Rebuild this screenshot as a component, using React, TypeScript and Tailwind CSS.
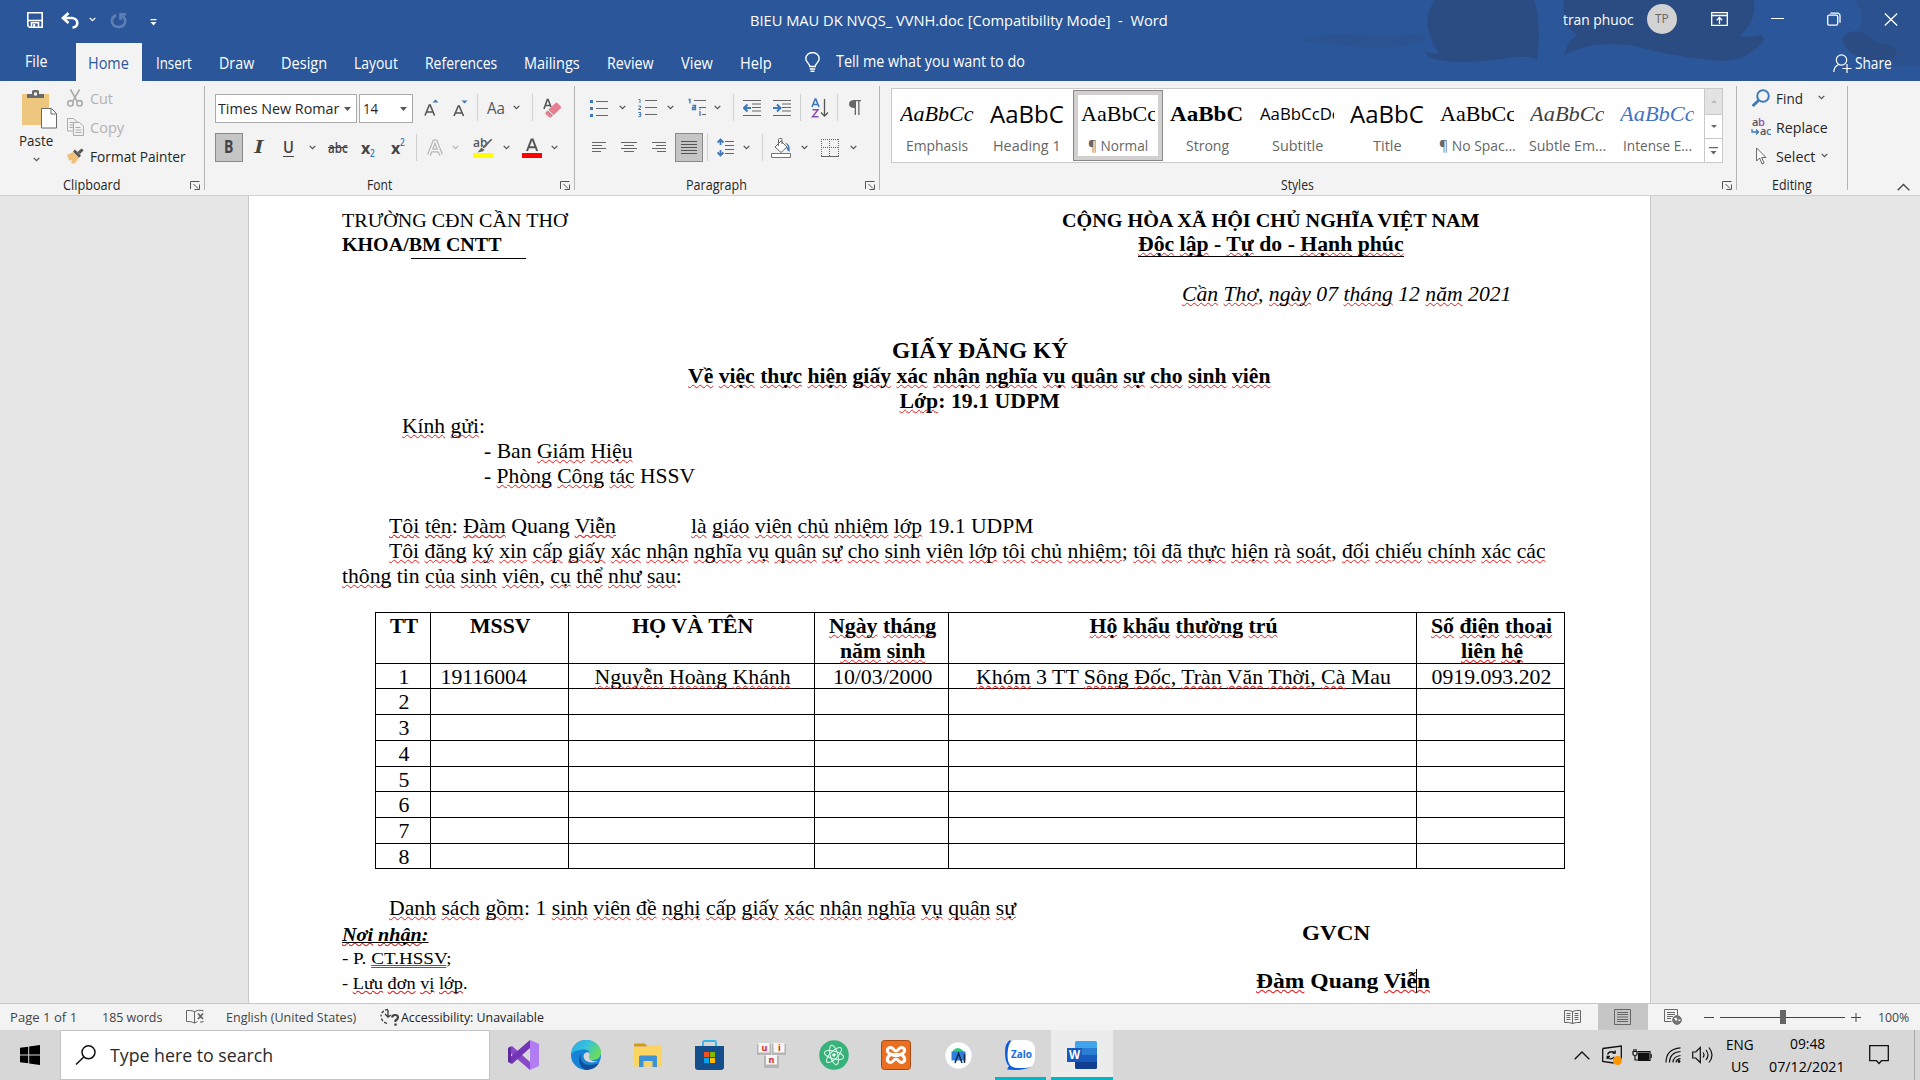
import React, { useLayoutEffect, useRef } from "react";

/* One line of text, condensed or widened so that it fills its box. */
function Fit({ className = "", children }: { className?: string; children: React.ReactNode }) {
  const box = useRef<HTMLSpanElement>(null);
  const inner = useRef<HTMLSpanElement>(null);
  useLayoutEffect(() => {
    if (!box.current || !inner.current) return;
    const natural = inner.current.offsetWidth;
    if (natural > 0) inner.current.style.transform = `scaleX(${box.current.clientWidth / natural})`;
  }, []);
  return (
    <span ref={box} className={`block shrink-0 whitespace-pre ${className}`}>
      <span ref={inner} className="inline-block origin-left [text-decoration:inherit]">
        {children}
      </span>
    </span>
  );
}

/* Words that begin with "~" get the spelling squiggle; "|" ends the marked part. */
function Spell({ t }: { t: string }) {
  return (
    <>
      {t.split(" ").map((w, i) => {
        const sp = i > 0 ? " " : "";
        if (!w.startsWith("~")) return <React.Fragment key={i}>{sp + w}</React.Fragment>;
        const [marked, rest] = w.slice(1).split("|");
        return (
          <React.Fragment key={i}>
            {sp}
            <span className="underline decoration-[#f01818] decoration-wavy decoration-[1px] underline-offset-[1px] [text-decoration-skip-ink:none]">
              {marked}
            </span>
            {rest}
          </React.Fragment>
        );
      })}
    </>
  );
}

function Chevron({ className = "", color = "#555" }: { className?: string; color?: string }) {
  return (
    <svg className={`h-[5px] w-[7px] shrink-0 ${className}`} viewBox="0 0 7 5" fill="none">
      <path d="M.7.9 3.5 3.7 6.3.9" stroke={color} strokeWidth="1.3" />
    </svg>
  );
}

function Sep({ className = "" }: { className?: string }) {
  return <div className={`h-[27px] w-px shrink-0 bg-[#d0d0d0] ${className}`} />;
}

function GroupSep() {
  return <div className="mt-[5px] h-[104px] w-px shrink-0 bg-[#b5b5b5]" />;
}

function Launcher() {
  return (
    <svg className="h-[9px] w-[10px] shrink-0" viewBox="0 0 10 9" fill="none" stroke="#555">
      <path d="M.5 8V.5H9.5M3.5 3l4.5 4.5M9.5 3.5V8.5H4.5" />
    </svg>
  );
}

function TitleBar() {
  return (
    <div className="relative z-10 flex h-[43px] text-[15px] leading-[20px] text-white">
      <svg className="mt-[12px] ml-[27px] h-[16px] w-[16px]" viewBox="0 0 16 16" fill="none" stroke="#fff" strokeWidth="1.6">
        <path d="M.8.8h14.4v14.4H2.4L.8 13.6zM.8 8.5h14.4" />
        <path d="M4.5 15v-4.2h7V15" />
        <path d="M6.2 12h2v3h-2z" fill="#fff" stroke="none" />
      </svg>
      <svg className="mt-[12px] ml-[18px] h-[17px] w-[18px]" viewBox="0 0 18 17" fill="none" stroke="#fff" strokeWidth="2.6">
        <path d="M1.5 6H11c7 .5 7 9.500.5 9.500" />
        <path d="M7.500 1 2 6l5.500 5" />
      </svg>
      <Chevron className="mt-[17px] ml-[10px]" color="#fff" />
      <svg className="mt-[12px] ml-[14px] h-[17px] w-[17px]" viewBox="0 0 17 17" fill="none" stroke="#5e80b5" strokeWidth="2.600">
        <path d="M6 3C-1 7 2 15 8.500 15s9-7 4-11M10.500 8V2.200H16" />
      </svg>
      <svg className="mt-[19px] ml-[23px] h-[7px] w-[7px]" viewBox="0 0 7 7">
        <path d="M.5 0h6v1.300h-6zM.5 3h6L3.500 6.500z" fill="#fff" />
      </svg>
      <Fit className="mt-[10px] ml-[593px] w-[418px]">BIEU MAU DK NVQS_ VVNH.doc [Compatibility Mode]  -  Word</Fit>
      <Fit className="mt-[9px] ml-[395px] w-[71px]">tran phuoc</Fit>
      <div className="mt-[4px] ml-[13px] flex h-[30px] w-[30px] shrink-0 items-center justify-center rounded-full bg-[#d2d2d2]">
        <Fit className="w-[14px] text-[12px] text-[#666]">TP</Fit>
      </div>
      <svg className="mt-[12px] ml-[34px] h-[14px] w-[17px] shrink-0" viewBox="0 0 17 14" fill="none" stroke="#fff" strokeWidth="1.300">
        <path d="M.7.7h15.600v12.600H.7zM.7 3.500h15.600M8.500 12V6M5.800 8.200l2.700-2.700 2.700 2.700" />
      </svg>
      <div className="mt-[18px] ml-[43px] h-px w-[13px] shrink-0 bg-white" />
      <svg className="mt-[12px] ml-[43px] h-[14px] w-[14px] shrink-0" viewBox="0 0 14 14" fill="none" stroke="#fff" strokeWidth="1.300">
        <rect x=".7" y="3.200" width="10" height="10" rx="1.500" />
        <path d="M3.300 1.200h7a2.500 2.500 0 0 1 2.700 2.500v7" />
      </svg>
      <svg className="mt-[13px] ml-[43px] h-[13px] w-[14px] shrink-0" viewBox="0 0 14 13" stroke="#fff" strokeWidth="1.300">
        <path d="M.8.500l12.400 12M13.200.5.800 12.500" />
      </svg>
    </div>
  );
}

function Tabs() {
  return (
    <div className="relative z-10 flex h-[38px] text-[15.500px] leading-[20px] text-white">
      <Fit className="mt-[8px] ml-[25px] w-[23px]">File</Fit>
      <div className="ml-[28px] h-[38px] w-[66px] shrink-0 bg-[#f3f3f3] pt-[10px] pl-[12px] text-[#2b579a]">
        <Fit className="w-[41px]">Home</Fit>
      </div>
      <Fit className="mt-[10px] ml-[14px] w-[36px]">Insert</Fit>
      <Fit className="mt-[10px] ml-[27px] w-[35px]">Draw</Fit>
      <Fit className="mt-[10px] ml-[27px] w-[46px]">Design</Fit>
      <Fit className="mt-[10px] ml-[27px] w-[44px]">Layout</Fit>
      <Fit className="mt-[10px] ml-[27px] w-[72px]">References</Fit>
      <Fit className="mt-[10px] ml-[27px] w-[56px]">Mailings</Fit>
      <Fit className="mt-[10px] ml-[27px] w-[47px]">Review</Fit>
      <Fit className="mt-[10px] ml-[27px] w-[32px]">View</Fit>
      <Fit className="mt-[10px] ml-[27px] w-[32px]">Help</Fit>
      <svg className="mt-[9px] ml-[33px] h-[20px] w-[15px] shrink-0" viewBox="0 0 15 20" fill="none" stroke="#fff" strokeWidth="1.400">
        <path d="M4.800 14.500c0-3-4-4-4-8a6.700 6 0 0 1 13.400 0c0 4-4 5-4 8zM4.800 17h5.400M5.500 19.300h4" />
      </svg>
      <Fit className="mt-[8px] ml-[16px] w-[189px]">Tell me what you want to do</Fit>
      <svg className="mt-[11px] ml-[808px] h-[19px] w-[19px] shrink-0" viewBox="0 0 19 19" fill="none" stroke="#fff" strokeWidth="1.200">
        <circle cx="8.500" cy="6" r="5.200" />
        <path d="M.7 18c.3-4 2-6.500 5.300-7.500M14 10v9M9.500 14.500h9" />
      </svg>
      <Fit className="mt-[10px] ml-[3px] w-[37px]">Share</Fit>
    </div>
  );
}

function ClipboardGroup() {
  return (
    <div className="flex h-[114px] w-[204px] shrink-0 flex-col">
      <div className="flex h-[96px] pl-[18px]">
        <div className="w-[49px] pt-[9px]">
          <svg className="ml-[4px] h-[39px] w-[35px]" viewBox="0 0 35 39">
            <path d="M0 4h27v31H0z" fill="#eec77e" />
            <path d="M5 8V4h5V1.500Q10 0 11.500 0h4Q17 0 17 1.500V4h5v4z" fill="#6a6a6a" />
            <path d="M12 2.500h3v3h-3z" fill="#f3f3f3" />
            <path d="M19.500 18.500h10l5 5v14.500h-15z" fill="#fff" stroke="#6a6a6a" />
            <path d="M29 18.500v5.500h5.500" fill="none" stroke="#6a6a6a" />
          </svg>
          <Fit className="mt-[1px] ml-px w-[34px]">Paste</Fit>
          <Chevron className="mt-[7px] ml-[15px]" />
        </div>
        <div className="pt-[2px]">
          <div className="flex h-[29px] items-center text-[#b1b1b1]">
            <svg className="h-[18px] w-[16px]" viewBox="0 0 16 18" fill="none" stroke="#ababab" strokeWidth="1.600">
              <path d="M3.500.500 10 12M12.500.500 6 12" />
              <circle cx="3.500" cy="14.300" r="2.700" />
              <circle cx="12.500" cy="14.300" r="2.700" />
            </svg>
            <Fit className="ml-[7px] w-[23px]">Cut</Fit>
          </div>
          <div className="flex h-[29px] items-center text-[#b1b1b1]">
            <svg className="h-[18px] w-[17px]" viewBox="0 0 17 18" fill="#f3f3f3" stroke="#ababab">
              <path d="M.5.500h6l3.500 3v9.500H.5zM2.500 4.500h4M2.500 7h4M2.500 9.500h4" />
              <path d="M6.500 4.500h6l4 3.500v9.500h-10zM8.500 9.500h5M8.500 12h6M8.500 14.500h6" />
            </svg>
            <Fit className="ml-[6px] w-[34px]">Copy</Fit>
          </div>
          <div className="flex h-[29px] items-center">
            <svg className="h-[16px] w-[17px]" viewBox="0 0 17 16">
              <path d="M0 7 6 4l6 6-5 6-3-1.500.8-2.500L2 12.500z" fill="#eec07a" />
              <path d="M6 3.500 8 1.500l6 6-2 2.200z" fill="#555" />
              <path d="M10.500 4 14.500.5 16.700 2.300 13 6z" fill="#555" />
            </svg>
            <Fit className="ml-[6px] w-[96px]">Format Painter</Fit>
          </div>
        </div>
      </div>
      <div className="flex h-[16px] items-center pl-[63px] text-[14px] leading-[16px]">
        <Fit className="mr-[69px] w-[58px]">Clipboard</Fit>
        <Launcher />
      </div>
    </div>
  );
}

function FontGroup() {
  return (
    <div className="flex h-[114px] w-[369px] shrink-0 flex-col">
      <div className="h-[96px] pt-[13px] pl-[10px]">
        <div className="flex h-[29px] items-center pb-[2px]">
          <div className="mt-[2px] flex h-[29px] w-[142px] shrink-0 items-center border border-[#ababab] bg-white pl-[2px]">
            <Fit className="w-[121px] pb-[2px]">Times New Romar</Fit>
            <svg className="ml-[5px] h-[4px] w-[7px]" viewBox="0 0 7 4"><path d="M0 0h7L3.500 4z" fill="#555" /></svg>
          </div>
          <div className="mt-[2px] ml-[2px] flex h-[29px] w-[54px] shrink-0 items-center border border-[#ababab] bg-white pl-[3px]">
            <Fit className="w-[15px] pb-[2px]">14</Fit>
            <svg className="ml-[22px] h-[4px] w-[7px]" viewBox="0 0 7 4"><path d="M0 0h7L3.500 4z" fill="#555" /></svg>
          </div>
          <svg className="ml-[11px] h-[18px] w-[15px] shrink-0" viewBox="0 0 15 18" fill="none">
            <path d="M1 16.500 5.300 6h.9l4.300 10.500M2.500 13h6.500" stroke="#555" strokeWidth="1.600" />
            <path d="M8.500 3.500h6L11.500.5z" fill="#3d79b8" />
          </svg>
          <svg className="ml-[14px] h-[18px] w-[15px] shrink-0" viewBox="0 0 15 18" fill="none">
            <path d="M1 17 5.300 7h.9l4.300 10M2.500 14h6.500" stroke="#555" strokeWidth="1.600" />
            <path d="M8.500 1.500h6L11.500 4.500z" fill="#3d79b8" />
          </svg>
          <Sep className="ml-[9px]" />
          <Fit className="ml-[9px] w-[18px] text-[16px] text-[#555]">Aa</Fit>
          <Chevron className="ml-[8px]" />
          <Sep className="ml-[12px]" />
          <svg className="ml-[10px] h-[20px] w-[19px] shrink-0" viewBox="0 0 19 20" fill="none">
            <path d="M1 11 4.300 1.500h.8L8 9M2.500 7.500h4.500" stroke="#555" strokeWidth="1.600" />
            <path d="m2.500 14.500 10-9.500q1-1 2 0l3.300 3.500q.8 1-.2 2L8 19.500H6.500l-4-3.500z" fill="#e67f92" />
            <path d="m5 12 5.500 5.500" stroke="#f3f3f3" />
          </svg>
        </div>
        <div className="mt-[10px] flex h-[29px] items-center text-[#444]">
          <div className="flex h-[29px] w-[28px] shrink-0 items-center border border-[#8a8a8a] bg-[#c5c5c5] pl-[8px]">
            <Fit className="w-[9px] pb-[2px] text-[17px] font-bold">B</Fit>
          </div>
          <Fit className="ml-[11px] w-[9px] pb-[2px] font-['Liberation_Serif'] text-[19px] font-bold italic">I</Fit>
          <Fit className="ml-[20px] w-[11px] pb-[2px] text-[16px] font-semibold underline underline-offset-[3px]">U</Fit>
          <Chevron className="ml-[15px]" />
          <Fit className="ml-[12px] w-[20px] text-[14px] font-semibold line-through">abc</Fit>
          <Fit className="ml-[13px] w-[9px] text-[16px] font-bold">x</Fit>
          <Fit className="mt-[10px] w-[5px] text-[10px] font-semibold text-[#3d79b8]">2</Fit>
          <Fit className="ml-[16px] w-[9px] text-[16px] font-bold">x</Fit>
          <Fit className="mb-[12px] w-[5px] text-[10px] font-semibold text-[#3d79b8]">2</Fit>
          <Sep className="ml-[11px]" />
          <svg className="ml-[10px] h-[17px] w-[16px] shrink-0" viewBox="0 0 16 17" fill="none">
            <path d="M2 16 7.200 2.500h1.600L14 16M4 11.500h8" stroke="#b5b5b5" strokeWidth="4" />
            <path d="M2 16 7.200 2.500h1.600L14 16M4 11.500h8" stroke="#f6f6f6" strokeWidth="1.600" />
          </svg>
          <Chevron className="ml-[9px]" color="#b5b5b5" />
          <div className="ml-[14px] flex h-[20px] w-[20px] shrink-0 flex-col justify-between">
            <svg className="h-[15px] w-[20px]" viewBox="0 0 20 15">
              <text x="0" y="9" fontSize="12" fontWeight="600" fill="#555" fontFamily="Open Sans">ab</text>
              <path d="m19.500 1.500-8.500 9-1.500-1.500L18 .800zM8.500 9.500l3 2.500-2 1.500-5 1z" fill="#666" />
            </svg>
            <div className="h-[5px] bg-[#ffff00]" />
          </div>
          <Chevron className="ml-[10px]" />
          <div className="ml-[12px] flex h-[20px] w-[20px] shrink-0 flex-col justify-between">
            <svg className="h-[14px] w-[20px]" viewBox="0 0 20 14" fill="none">
              <path d="M5 13 9.500 1.500h1.200L15.200 13M6.500 9.300h7" stroke="#555" strokeWidth="2" />
            </svg>
            <div className="h-[5px] bg-[#ff0000]" />
          </div>
          <Chevron className="ml-[9px]" />
        </div>
      </div>
      <div className="flex h-[16px] items-center pl-[162px] text-[14px] leading-[16px]">
        <Fit className="mr-[168px] w-[25px]">Font</Fit>
        <Launcher />
      </div>
    </div>
  );
}

function ParagraphGroup() {
  return (
    <div className="flex h-[114px] w-[304px] shrink-0 flex-col">
      <div className="h-[96px] pt-[13px] pl-[15px]">
        <div className="flex h-[29px] items-center pb-[2px]">
          <svg className="h-[18px] w-[18px] shrink-0" viewBox="0 0 18 18">
            <path d="M0 1h3v3H0zM0 8h3v3H0zM0 15h3v3H0z" fill="#3d79b8" />
            <path d="M6 2.500h12M6 9.500h12M6 16.500h12" stroke="#666" />
          </svg>
          <Chevron className="ml-[11px]" />
          <svg className="ml-[12px] h-[19px] w-[19px] shrink-0" viewBox="0 0 19 19" fill="none">
            <path d="M.5 1.500H2V5M.3 8h2.400v1L.5 11.500h2.500M.3 14.500h2.400v4H.3M1 16.500h1.700" stroke="#3d79b8" />
            <path d="M7 2.500h12M7 9.500h12M7 16.500h12" stroke="#666" />
          </svg>
          <Chevron className="ml-[10px]" />
          <svg className="ml-[14px] h-[19px] w-[18px] shrink-0" viewBox="0 0 18 19" fill="none">
            <path d="M.5 1.500H2V5.500M4.500 7.500h3v4h-3v-2h3M12 10.500v1.200M12 13V18" stroke="#3d79b8" strokeWidth="1.300" />
            <path d="M6 2.500h12M11 9.500h7M14 16.500h4" stroke="#666" />
          </svg>
          <Chevron className="ml-[8px]" />
          <Sep className="ml-[12px]" />
          <svg className="ml-[9px] h-[18px] w-[18px] shrink-0" viewBox="0 0 18 18" fill="none">
            <path d="M0 1.500h18M9 5h9M9 8.500h9M9 12h9M0 16.500h18" stroke="#666" />
            <path d="M8 9H2M4.500 5.500 1 9l3.500 3.500" stroke="#3d79b8" strokeWidth="2" />
          </svg>
          <svg className="ml-[12px] h-[18px] w-[18px] shrink-0" viewBox="0 0 18 18" fill="none">
            <path d="M0 1.500h18M9 5h9M9 8.500h9M9 12h9M0 16.500h18" stroke="#666" />
            <path d="M0 9h6M4 5.500 7.500 9 4 12.500" stroke="#3d79b8" strokeWidth="2" />
          </svg>
          <Sep className="ml-[9px]" />
          <svg className="ml-[10px] h-[20px] w-[18px] shrink-0" viewBox="0 0 18 20" fill="none">
            <path d="M1 9 4.200 1h.6L8 9M2.200 6.500h4.600" stroke="#3d79b8" strokeWidth="1.600" />
            <path d="M1.500 11.800h5.500l-5.500 7h6" stroke="#8e4fae" strokeWidth="1.500" />
            <path d="M13.500 1v17M10 14.500l3.500 3.500 3.500-3.500" stroke="#555" strokeWidth="1.300" />
          </svg>
          <Sep className="ml-[8px]" />
          <svg className="ml-[11px] h-[16px] w-[12px] shrink-0" viewBox="0 0 12 16">
            <path d="M5.500 0H12v1.300h-1.500V15H9.200V1.300H7V15H5.700V8C2 8 0 6.500 0 4s2-4 5.500-4z" fill="#666" />
          </svg>
        </div>
        <div className="mt-[10px] flex h-[29px] items-center">
          <svg className="ml-[2px] h-[13px] w-[14px] shrink-0" viewBox="0 0 14 13" stroke="#666">
            <path d="M0 1.500h14M0 4.500h10M0 7.500h14M0 10.500h9" />
          </svg>
          <svg className="ml-[15px] h-[13px] w-[16px] shrink-0" viewBox="0 0 16 13" stroke="#666">
            <path d="M0 1.500h16M3 4.500h10M0 7.500h16M3 10.500h10" />
          </svg>
          <svg className="ml-[15px] h-[13px] w-[14px] shrink-0" viewBox="0 0 14 13" stroke="#666">
            <path d="M0 1.500h14M4 4.500h10M0 7.500h14M5 10.500h9" />
          </svg>
          <div className="ml-[9px] flex h-[29px] w-[28px] shrink-0 items-center justify-center border border-[#8a8a8a] bg-[#c5c5c5]">
            <svg className="h-[14px] w-[16px]" viewBox="0 0 16 14" stroke="#555">
              <path d="M0 .500h16M0 3.500h16M0 6.500h16M0 9.500h16M0 12.500h16" />
            </svg>
          </div>
          <Sep className="ml-[4px]" />
          <svg className="ml-[9px] h-[19px] w-[17px] shrink-0" viewBox="0 0 17 19" fill="none">
            <path d="M3.500 1v6M3.500 12v6M.5 4.500l3-3 3 3M.5 14.500l3 3 3-3" stroke="#3d79b8" strokeWidth="1.800" />
            <path d="M8 3.500h9M8 7.500h9M8 11.500h9M8 15.500h9" stroke="#666" />
          </svg>
          <Chevron className="ml-[9px]" />
          <Sep className="ml-[12px]" />
          <svg className="ml-[8px] h-[20px] w-[20px] shrink-0" viewBox="0 0 20 20" fill="none">
            <path d="M4 9 10 3l6 6-6 5.500z" fill="#fff" stroke="#666" />
            <path d="M7.500 8V1.500q0-1 1-1h1.500q1 0 1 1V6" stroke="#666" />
            <path d="M14 4.500q6 1.500 4.500 9.500-1.500-1-3-3l1.500-2.500z" fill="#3d79b8" />
            <path d="M.5 15.500h19v4H.5z" fill="#fff" stroke="#777" />
          </svg>
          <Chevron className="ml-[10px]" />
          <svg className="ml-[13px] h-[18px] w-[18px] shrink-0" viewBox="0 0 18 18" fill="none" stroke="#666">
            <path d="M0 .500h18M.5 0v17M17.500 0v17M8.500 0v17M0 8.500h18" strokeDasharray="1 1" />
            <path d="M0 17.500h18" />
          </svg>
          <Chevron className="ml-[11px]" />
        </div>
      </div>
      <div className="flex h-[16px] items-center pl-[111px] text-[14px] leading-[16px]">
        <Fit className="mr-[118px] w-[61px]">Paragraph</Fit>
        <Launcher />
      </div>
    </div>
  );
}

type Style = { sample: string; label: string; look: string; width: string };

const STYLES: Style[] = [
  { sample: "AaBbCc", label: "Emphasis", look: "font-['Liberation_Serif'] text-[21.5px] italic w-[74px]", width: "w-[62px]" },
  { sample: "AaBbC", label: "Heading 1", look: "text-[24px] w-[74px]", width: "w-[68px]" },
  { sample: "AaBbCc", label: "¶ Normal", look: "font-['Liberation_Serif'] text-[21.5px] w-[76px]", width: "w-[60px]" },
  { sample: "AaBbC", label: "Strong", look: "font-['Liberation_Serif'] text-[21.5px] font-bold w-[73px]", width: "w-[43px]" },
  { sample: "AaBbCcDc", label: "Subtitle", look: "text-[17px] w-[80px]", width: "w-[51px]" },
  { sample: "AaBbC", label: "Title", look: "text-[24px] w-[74px]", width: "w-[29px]" },
  { sample: "AaBbCc", label: "¶ No Spac...", look: "font-['Liberation_Serif'] text-[21.5px] w-[76px]", width: "w-[77px]" },
  { sample: "AaBbCc", label: "Subtle Em...", look: "font-['Liberation_Serif'] text-[21.5px] italic text-[#404040] w-[75px]", width: "w-[77px]" },
  { sample: "AaBbCc", label: "Intense E...", look: "font-['Liberation_Serif'] text-[21.5px] italic text-[#4472c4] w-[75px]", width: "w-[69px]" },
];

function StylesGroup() {
  return (
    <div className="flex h-[114px] w-[856px] shrink-0 flex-col">
      <div className="h-[96px] pt-[7px] pl-[11px]">
        <div className="flex h-[75px] w-[832px] border border-[#c9c9c9] bg-white">
          <div className="flex w-[812px] shrink-0 pt-px pl-px">
            {STYLES.map((s, i) => (
              <div
                key={s.label}
                className={`flex h-[71px] w-[90px] shrink-0 flex-col items-center ${
                  i === 2 ? "border border-[#8a8886] shadow-[inset_0_0_0_4px_#d2d0ce]" : "border border-transparent pr-[2px]"
                }`}
              >
                <div className="mt-[9px] w-[74px] overflow-hidden text-black">
                  <Fit className={`h-[28px] leading-[28px] ${s.look}`}>{s.sample}</Fit>
                </div>
                <Fit className={`mt-[7px] text-[15px] leading-[20px] text-[#666] ${s.width}`}>{s.label}</Fit>
              </div>
            ))}
          </div>
          <div className="flex w-[18px] shrink-0 flex-col border-l border-[#c9c9c9]">
            <div className="flex h-[26px] items-center justify-center border-b border-[#c9c9c9] bg-[#e3e3e3]">
              <svg className="h-[3px] w-[6px]" viewBox="0 0 6 3"><path d="M0 3h6L3 0z" fill="#b8b8b8" /></svg>
            </div>
            <div className="flex h-[24px] items-center justify-center border-b border-[#c9c9c9]">
              <svg className="h-[3px] w-[6px]" viewBox="0 0 6 3"><path d="M0 0h6L3 3z" fill="#666" /></svg>
            </div>
            <div className="flex flex-1 items-center justify-center">
              <svg className="h-[8px] w-[9px]" viewBox="0 0 9 8"><path d="M0 0h9v1.200H0zM1.500 4h6l-3 3.500z" fill="#666" /></svg>
            </div>
          </div>
        </div>
      </div>
      <div className="flex h-[16px] items-center pl-[401px] text-[14px] leading-[16px]">
        <Fit className="mr-[408px] w-[33px]">Styles</Fit>
        <Launcher />
      </div>
    </div>
  );
}

function EditingGroup() {
  return (
    <div className="flex h-[114px] w-[110px] shrink-0 flex-col">
      <div className="h-[96px] pt-[2px] pl-[14px]">
        <div className="flex h-[29px] items-center">
          <svg className="mr-[6px] ml-px h-[18px] w-[18px]" viewBox="0 0 18 18" fill="none" stroke="#3d79b8">
            <circle cx="11" cy="7" r="5.800" strokeWidth="2" />
            <path d="M6.500 11.500.8 17" strokeWidth="2.800" />
          </svg>
          <Fit className="w-[27px]">Find</Fit>
          <Chevron className="ml-[15px]" />
        </div>
        <div className="flex h-[29px] items-center">
          <svg className="mr-[5px] h-[18px] w-[20px]" viewBox="0 0 20 18" fill="none">
            <text x="1" y="8" fontSize="11" fontWeight="600" fill="#555" fontFamily="Open Sans">a</text>
            <text x="7" y="8" fontSize="11" fontWeight="600" fill="#8e4fae" fontFamily="Open Sans">b</text>
            <text x="9" y="17" fontSize="11" fontWeight="600" fill="#555" fontFamily="Open Sans">a</text>
            <text x="15" y="17" fontSize="11" fontWeight="600" fill="#3d79b8" fontFamily="Open Sans">c</text>
            <path d="M1 11v3h6M5 11.500 7.500 14 5 16.500" stroke="#3d79b8" strokeWidth="1.300" />
          </svg>
          <Fit className="w-[52px]">Replace</Fit>
        </div>
        <div className="flex h-[29px] items-center">
          <svg className="mr-[9px] ml-[5px] h-[18px] w-[11px]" viewBox="0 0 11 18">
            <path d="M.6 1v13l3-3 2.500 6 2-1-2.500-5.500H10z" fill="#fff" stroke="#666" />
          </svg>
          <Fit className="w-[39px]">Select</Fit>
          <Chevron className="ml-[6px]" />
        </div>
      </div>
      <div className="flex h-[16px] items-center pl-[35px] text-[14px] leading-[16px]">
        <Fit className="w-[40px]">Editing</Fit>
      </div>
    </div>
  );
}

const ROWS = [
  { n: "2", h: "h-[26px]" },
  { n: "3", h: "h-[26px]" },
  { n: "4", h: "h-[26px]" },
  { n: "5", h: "h-[25px]" },
  { n: "6", h: "h-[26px]" },
  { n: "7", h: "h-[26px]" },
  { n: "8", h: "h-[25px]" },
];

function Cell({ className = "pl-[2px]", children }: { className?: string; children?: React.ReactNode }) {
  return <div className={`flex flex-col items-center border-r border-black pt-px ${className}`}>{children}</div>;
}

function StudentTable() {
  const cols = "grid grid-cols-[55px_138px_246px_134px_468px_148px] grid-rows-[100%] border-b border-black";
  return (
    <div className="mt-[23px] ml-[126px] w-[1190px] border-t border-l border-black leading-[25px]">
      <div className={`h-[51px] font-bold ${cols}`}>
        <Cell><Fit className="w-[28px]">TT</Fit></Cell>
        <Cell><Fit className="w-[61px]">MSSV</Fit></Cell>
        <Cell><Fit className="w-[121px]">HỌ VÀ TÊN</Fit></Cell>
        <Cell>
          <Fit className="w-[107px]"><Spell t="~Ngày ~tháng" /></Fit>
          <Fit className="w-[85px]"><Spell t="~năm ~sinh" /></Fit>
        </Cell>
        <Cell><Fit className="w-[188px]"><Spell t="~Hộ ~khẩu ~thường ~trú" /></Fit></Cell>
        <Cell>
          <Fit className="w-[121px]"><Spell t="~Số ~điện ~thoại" /></Fit>
          <Fit className="w-[62px]"><Spell t="~liên ~hệ" /></Fit>
        </Cell>
      </div>
      <div className={`h-[25px] ${cols}`}>
        <Cell><Fit className="w-[11px]">1</Fit></Cell>
        <Cell className="pr-[32px]"><Fit className="w-[86px]">19116004</Fit></Cell>
        <Cell><Fit className="w-[196px]"><Spell t="~Nguyễn ~Hoàng ~Khánh" /></Fit></Cell>
        <Cell><Fit className="w-[99px]">10/03/2000</Fit></Cell>
        <Cell><Fit className="w-[415px]"><Spell t="~Khóm 3 TT ~Sông ~Đốc|, ~Tràn ~Văn ~Thời|, ~Cà Mau" /></Fit></Cell>
        <Cell><Fit className="w-[120px]">0919.093.202</Fit></Cell>
      </div>
      {ROWS.map((r) => (
        <div key={r.n} className={`${r.h} ${cols}`}>
          <Cell><Fit className="w-[11px]">{r.n}</Fit></Cell>
          <Cell /><Cell /><Cell /><Cell /><Cell />
        </div>
      ))}
    </div>
  );
}

function Document() {
  return (
    <div className="h-[807px] overflow-hidden bg-[#e6e6e6]">
      <div className="ml-[248px] h-[807px] w-[1403px] border-x border-[#c6c6c6] bg-white pt-[13px] font-['Liberation_Serif',serif] text-[21.8px] leading-[25px] text-black">
        <div className="flex h-[48px] text-[19px] leading-[24px]">
          <div className="ml-[93px] w-[720px]">
            <Fit className="w-[225px]">TRƯỜNG CĐN CẦN THƠ</Fit>
            <Fit className="w-[159px] font-bold">KHOA/BM CNTT</Fit>
            <div className="mt-px ml-[69px] h-px w-[115px] bg-black" />
          </div>
          <div className="flex w-[418px] flex-col items-center font-bold">
            <Fit className="w-[418px]">CỘNG HÒA XÃ HỘI CHỦ NGHĨA VIỆT NAM</Fit>
            <Fit className="-mt-px w-[266px] text-[21.8px]"><Spell t="~Độc ~lập - ~Tự do - ~Hạnh ~phúc" /></Fit>
            <div className="h-px w-[266px] bg-black" />
          </div>
        </div>
        <Fit className="mt-[25px] ml-[933px] w-[329px] italic"><Spell t="~Cần ~Thơ|, ~ngày 07 ~tháng 12 ~năm 2021" /></Fit>
        <div className="mt-[31px] ml-[439px] flex w-[583px] flex-col items-center font-bold">
          <Fit className="mb-px w-[176px] text-[22.500px]">GIẤY ĐĂNG KÝ</Fit>
          <Fit className="w-[583px]"><Spell t="~Về ~việc ~thực ~hiện ~giấy ~xác ~nhận ~nghĩa ~vụ ~quân ~sự ~cho ~sinh ~viên" /></Fit>
          <Fit className="w-[160px]"><Spell t="~Lớp|: 19.1 UDPM" /></Fit>
        </div>
        <Fit className="ml-[153px] w-[83px]"><Spell t="~Kính ~gửi|:" /></Fit>
        <Fit className="ml-[235px] w-[149px]"><Spell t="- Ban ~Giám ~Hiệu" /></Fit>
        <Fit className="ml-[235px] w-[211px]"><Spell t="- ~Phòng ~Công ~tác HSSV" /></Fit>
        <div className="mt-[25px] ml-[140px] flex">
          <Fit className="w-[227px]"><Spell t="~Tôi ~tên|: ~Đàm Quang ~Viễn" /></Fit>
          <Fit className="ml-[75px] w-[343px]"><Spell t="~là ~giáo ~viên ~chủ ~nhiệm ~lớp 19.1 UDPM" /></Fit>
        </div>
        <Fit className="ml-[140px] w-[1157px]">
          <Spell t="~Tôi ~đăng ~ký ~xin ~cấp ~giấy ~xác ~nhận ~nghĩa ~vụ ~quân ~sự ~cho ~sinh ~viên ~lớp ~tôi ~chủ ~nhiệm|; ~tôi ~đã ~thực ~hiện ~rà ~soát|, ~đối ~chiếu ~chính ~xác ~các" />
        </Fit>
        <Fit className="ml-[93px] w-[340px]"><Spell t="~thông tin ~của ~sinh ~viên|, ~cụ ~thể ~như ~sau|:" /></Fit>
        <StudentTable />
        <Fit className="mt-[27px] ml-[140px] w-[627px]">
          <Spell t="~Danh ~sách ~gồm|: 1 ~sinh ~viên ~đề ~nghị ~cấp ~giấy ~xác ~nhận ~nghĩa ~vụ ~quân ~sự" />
        </Fit>
        <div className="flex pt-[2px] leading-[24px]">
          <div className="ml-[93px] w-[914px] text-[17px]">
            <Fit className="w-[86px] text-[19px] font-bold italic underline underline-offset-[1px]"><Spell t="~Nơi ~nhận|:" /></Fit>
            <Fit className="w-[110px]">
              - P. <span className="underline decoration-[#2b5fd9] decoration-double decoration-[1px] underline-offset-[1px] [text-decoration-skip-ink:none]">CT.HSSV</span>;
            </Fit>
            <Fit className="mt-px w-[125px]"><Spell t="- ~Lưu ~đơn ~vị ~lớp|." /></Fit>
          </div>
          <div className="w-[174px] font-bold">
            <Fit className="-mt-[2px] ml-[46px] w-[68px]">GVCN</Fit>
            <div className="relative mt-[24px]">
              <Fit className="w-[174px]"><Spell t="~Đàm Quang ~Viễn" /></Fit>
              <div className="absolute top-0 left-[160px] h-[24px] w-px bg-black" />
            </div>
          </div>
        </div>
      </div>
    </div>
  );
}

function StatusBar() {
  return (
    <div className="flex h-[27px] items-center border-t border-[#c6c6c6] bg-[#f3f3f3] text-[13.500px] leading-[18px] text-[#444]">
      <Fit className="ml-[10px] w-[67px]">Page 1 of 1</Fit>
      <Fit className="ml-[25px] w-[60px]">185 words</Fit>
      <svg className="ml-[24px] h-[16px] w-[18px] shrink-0" viewBox="0 0 18 16" fill="none" stroke="#666">
        <path d="M8.500 2.500Q5 1 .5 1.500v11q4.500-.5 8 1.500zM8.500 2.500Q12 .500 17 1.500v1M8.500 14l3-1.500M17 12v1h-3" />
        <path d="m12 4.500 5 5.500M17 4.500 12 10" strokeWidth="1.700" />
      </svg>
      <Fit className="ml-[22px] w-[130px]">English (United States)</Fit>
      <svg className="ml-[24px] h-[18px] w-[20px] shrink-0" viewBox="0 0 20 18" fill="none" stroke="#444" strokeWidth="1.400">
        <path d="M8 1.500a7 7 0 0 0-7 7" strokeDasharray="3 1.500" />
        <path d="M1.500 10.500a7 7 0 0 0 7 5" strokeDasharray="3 1.500" />
        <path d="M8 2v6.500M5 6l3 3 3-2" />
        <path d="M12 9.500q.5-2.500 3-2.500 3 0 3 2.500 0 1.500-2.500 3v1.500" strokeWidth="2.200" />
        <path d="M14.300 15.500h2.400v2.200h-2.400z" fill="#444" stroke="none" />
      </svg>
      <Fit className="ml-px w-[143px] text-[#222]">Accessibility: Unavailable</Fit>
      <svg className="ml-[1020px] h-[16px] w-[17px] shrink-0" viewBox="0 0 17 16" fill="none" stroke="#666">
        <path d="M8.500 2.500Q5 1 .5 1.500v12q4.500-.5 8 1 3.500-1.500 8-1v-12q-4.500-.5-8 1zV15" />
        <path d="M2.500 4.500h4M2.500 6.500h4M2.500 8.500h4M2.500 10.500h4M10.500 4.500h4M10.500 6.500h4M10.500 8.500h4M10.500 10.500h4" />
      </svg>
      <div className="ml-[17px] flex h-[26px] w-[50px] shrink-0 items-center justify-center bg-[#c6c6c6]">
        <svg className="mr-px h-[16px] w-[17px]" viewBox="0 0 17 16" fill="none" stroke="#666">
          <path d="M.5.500h16v15H.5zM3 3.500h11M3 5.500h11M3 8h11M3 10.500h11M3 12.500h11" />
        </svg>
      </div>
      <svg className="ml-[16px] h-[16px] w-[18px] shrink-0" viewBox="0 0 18 16" fill="none" stroke="#666">
        <path d="M7.500 12.500h-7v-12h13v6M3 3.500h8M3 5.500h8M3 7.500h6M3 9.500h4" />
        <circle cx="13" cy="11" r="4.300" fill="#777" />
        <path d="m10 9 2-.5 1.500 2-1.500 1.500zM14 12l2-2 .5 2z" fill="#fff" stroke="none" />
      </svg>
      <div className="ml-[22px] h-px w-[10px] shrink-0 bg-[#444]" />
      <div className="ml-[6px] flex h-[15px] w-[125px] shrink-0 items-center bg-[linear-gradient(#444,#444)] bg-[length:100%_1px] bg-center bg-no-repeat">
        <div className="ml-[60px] h-[14px] w-[6px] bg-[#666]" />
      </div>
      <svg className="ml-[6px] h-[9px] w-[10px] shrink-0" viewBox="0 0 10 9" stroke="#444">
        <path d="M0 4.500h10M5 0v9" />
      </svg>
      <Fit className="ml-[17px] w-[31px]">100%</Fit>
    </div>
  );
}

function AppSlot({ children, className = "" }: { children: React.ReactNode; className?: string }) {
  return <div className={`flex h-[50px] w-[62px] shrink-0 items-center justify-center ${className}`}>{children}</div>;
}

function TaskApps() {
  return (
    <div className="ml-[3px] flex shrink-0">
      <AppSlot>
        <svg className="mr-px h-[30px] w-[31px]" viewBox="0 0 31 30">
          <path d="M22 0 31 4v22l-9 4z" fill="#b27df2" />
          <path d="M0 8 4 6 22 22v8L0 11z" fill="#8648c9" />
          <path d="M22 0v8L4 24l-4-2v-3z" fill="#7235b5" />
          <path d="M0 8l3-1.500V23L0 21.500z" fill="#5f2a9e" />
        </svg>
      </AppSlot>
      <AppSlot>
        <svg className="h-[30px] w-[30px]" viewBox="0 0 30 30">
          <defs>
            <linearGradient id="edgeTop" x1="0" y1="0" x2="1" y2=".5">
              <stop offset="0" stopColor="#2aa8e0" /><stop offset=".5" stopColor="#35c1e0" /><stop offset="1" stopColor="#6bdc5c" />
            </linearGradient>
          </defs>
          <circle cx="15" cy="15" r="15" fill="#1583d8" />
          <path d="M0 14C1 5 7 0 15 0c9 0 15 6 15 12.500 0 5-4 7.500-8 7.500-4 0-5-1.500-4-3 2-4 0-7.500-4.500-7.500C8 9.500 2 11 0 14z" fill="url(#edgeTop)" />
          <path d="M10 14c-2 9 5 14 18 9-3 5-8 7-13 7C9 28 6 20 10 14z" fill="#114f99" />
          <path d="M14 13q-3 3 0 7c3 3 8 3 14 1-3 1-10 0-10-4 2-3 0-6-4-4z" fill="#d7d7d7" />
        </svg>
      </AppSlot>
      <AppSlot>
        <svg className="h-[24px] w-[28px]" viewBox="0 0 28 24">
          <path d="M0 1.500Q0 .5 1 .5h10l3 3H0z" fill="#d99a07" />
          <path d="M0 4h12l2-2h13q1 0 1 1v20q0 .500-1 .500H0z" fill="#fcd462" />
          <path d="M5 24V14q0-1.500 1.500-1.500h15q1.500 0 1.500 1.500v10h-4.500v-6h-9v6z" fill="#3b93d6" />
        </svg>
      </AppSlot>
      <AppSlot>
        <svg className="mr-px h-[30px] w-[29px]" viewBox="0 0 29 30">
          <path d="M8 8V2.500Q8 1 9.500 1h10Q21 1 21 2.500V8" fill="none" stroke="#33b6ec" strokeWidth="1.800" />
          <path d="M0 6h29v21q0 3-3 3H3q-3 0-3-3z" fill="#144f8c" />
          <path d="M9 12h5v5H9z" fill="#f25022" /><path d="M15 12h5v5h-5z" fill="#7fba00" />
          <path d="M9 18h5v5H9z" fill="#00a4ef" /><path d="M15 18h5v5h-5z" fill="#ffb900" />
        </svg>
      </AppSlot>
      <AppSlot>
        <svg className="mr-px h-[25px] w-[29px]" viewBox="0 0 29 25" fontFamily="Open Sans" fontWeight="700" fontSize="9" fill="#e02020">
          <path d="M0 1h14v11H0zM15 1h14v11H15zM7 13h15v12H7z" fill="#b5b5b5" />
          <path d="M1.500 0h11v9.500h-11zM16.500 0h11v9.500h-11zM9 12h11v9.500H9z" fill="#f6f6f6" />
          <text x="4.500" y="7.500">u</text><text x="21" y="8">i</text><text x="11.500" y="20">n</text>
        </svg>
      </AppSlot>
      <AppSlot>
        <svg className="h-[30px] w-[30px]" viewBox="0 0 30 30" fill="none" stroke="#e4f7ee">
          <circle cx="15" cy="15" r="14.800" fill="#38b27b" stroke="none" />
          <ellipse cx="15" cy="15" rx="10" ry="3.800" transform="rotate(15 15 15)" />
          <ellipse cx="15" cy="15" rx="10" ry="3.800" transform="rotate(75 15 15)" />
          <ellipse cx="15" cy="15" rx="10" ry="3.800" transform="rotate(135 15 15)" />
          <circle cx="15" cy="15" r="1.300" fill="#fff" />
        </svg>
      </AppSlot>
      <AppSlot>
        <svg className="h-[30px] w-[30px]" viewBox="0 0 30 30" fill="none">
          <rect x=".5" y=".5" width="29" height="29" rx="3" fill="#ea6f20" stroke="#a84a12" />
          <path d="M11.500 15h7" stroke="#fff" strokeWidth="4" />
          <path d="M12 14.500C5 14 5 7.500 9.500 7.500c3 0 3 3.500 5.500 3.500s2.500-3.500 5.500-3.500c4.500 0 4.500 6.500-2.500 7 7 .5 7 8 2.500 8-3 0-3-3.500-5.500-3.500s-2.500 3.500-5.500 3.500c-4.500 0-4.500-7.500 2.500-8z" stroke="#fff" strokeWidth="3.200" />
        </svg>
      </AppSlot>
      <AppSlot>
        <svg className="h-[27px] w-[27px]" viewBox="0 0 27 27" fill="none">
          <circle cx="13.500" cy="13.500" r="13.200" fill="#fff" />
          <path d="M7.500 9q5-6 11 0v1.500h-11z" fill="#34c87a" />
          <path d="M6.500 9.500h14v9h-14z" fill="#2f7de0" />
          <path d="m10 21 3.500-9.500L17 21M19.500 12v9" stroke="#16283e" strokeWidth="1.500" />
        </svg>
      </AppSlot>
      <AppSlot className="relative">
        <svg className="h-[30px] w-[30px]" viewBox="0 0 30 30">
          <path d="M5 0q-5 3-5 12 0 11 4 14l-2 3.500q15 1.500 24-2.500z" fill="#0a5be0" />
          <path d="M10 0h10q10 0 10 10v8q0 10-10 10H11Q2.500 27 2.500 16 2.500 0 10 0z" fill="#fff" />
          <text x="6" y="18" fontSize="10.500" fontWeight="700" fill="#1a6be8" fontFamily="Open Sans" textLength="21" lengthAdjust="spacingAndGlyphs">Zalo</text>
        </svg>
        <div className="absolute bottom-0 left-[6px] h-[3px] w-[51px] bg-[#00b7c3]" />
      </AppSlot>
      <AppSlot className="border-b-[3px] border-[#00b7c3] bg-[#ececec]">
        <svg className="mt-[3px] h-[28px] w-[30px]" viewBox="0 0 30 28">
          <path d="M8 1.500Q8 0 9.500 0h19Q30 0 30 1.500V7H8z" fill="#41a5ee" />
          <path d="M8 7h22v7H8z" fill="#2b7cd3" />
          <path d="M8 14h22v7H8z" fill="#185abd" />
          <path d="M8 21h22v5.500q0 1.500-1.500 1.500h-19Q8 28 8 26.500z" fill="#103f91" />
          <path d="M0 7h15v14H0z" fill="#185abd" />
          <text x="2" y="18" fontSize="11.500" fontWeight="700" fill="#fff" fontFamily="Open Sans">W</text>
        </svg>
      </AppSlot>
    </div>
  );
}

function Taskbar() {
  return (
    <div className="flex h-[50px] bg-[#d7d7d7] text-black">
      <svg className="mt-[15px] ml-[20px] h-[20px] w-[20px] shrink-0" viewBox="0 0 20 20">
        <path d="M0 2.800 8.200 1.700v7.800H0zM9.200 1.500 20 0v9.500H9.200zM0 10.500h8.200v7.800L0 17.200zM9.200 10.500H20V20L9.200 18.500z" />
      </svg>
      <div className="ml-[20px] flex h-[50px] w-[430px] shrink-0 items-center border border-[#c4c4c4] bg-white">
        <svg className="ml-[14px] h-[20px] w-[21px]" viewBox="0 0 21 20" fill="none" stroke="#111" strokeWidth="1.500">
          <circle cx="13.500" cy="7.300" r="6.500" />
          <path d="M8.800 12 1 19.500" />
        </svg>
        <Fit className="ml-[14px] w-[163px] text-[18.500px] text-[#2a2a2a]">Type here to search</Fit>
      </div>
      <TaskApps />
      <div className="ml-[461px] flex shrink-0 items-center">
        <svg className="h-[9px] w-[16px]" viewBox="0 0 16 9" fill="none" stroke="#111" strokeWidth="1.300"><path d="M.7 8.300 8 1l7.300 7.300" /></svg>
        <svg className="ml-[12px] h-[20px] w-[20px]" viewBox="0 0 20 20" fill="none" stroke="#111" strokeWidth="1.300">
          <path d="M.7 3.500 19.300 1v13M.7 3.500v13l11 1.500" />
          <path d="M5.500 9.500q1.500-3.500 6-2.500l1.500 1M13.200 5.500V8H10.500M5.200 14v-2.500H8M5.500 12l1.500 1.500q3 1 5.500-1.500" />
          <circle cx="15.500" cy="15.500" r="4.500" fill="#ff9500" stroke="none" />
        </svg>
        <svg className="ml-[10px] h-[14px] w-[20px]" viewBox="0 0 20 14" fill="none" stroke="#111" strokeWidth="1.200">
          <path d="M1 3.500h4V6q0 1.500-2 1.500T1 6zM2 3.500V1M4 3.500V1M3 7.500V12h3" />
          <path d="M6 3.500h12v9H6" /><path d="M6.500 5h10v6.500h-10z" fill="#111" /><path d="M19.200 6v4" />
        </svg>
        <svg className="ml-[13px] h-[16px] w-[17px]" viewBox="0 0 17 16" fill="none" stroke="#111" strokeWidth="1.200">
          <path d="M1 15.500Q1 2 15.500.8M4.500 15.500Q4.500 5.500 15.500 4.500M8 15.500q0-6 7.500-7M11 15.500q0-3 4.500-3.800" />
          <circle cx="14" cy="14.500" r="1.400" fill="#111" stroke="none" />
        </svg>
        <svg className="ml-[10px] h-[18px] w-[21px]" viewBox="0 0 21 18" fill="none" stroke="#111" strokeWidth="1.200">
          <path d="M.7 6h3L8.300 1.500v15L3.700 12h-3zM11 6.500q2 2.500 0 5M14 4q4 5 0 10M17 1.500q6 7.500 0 15" />
        </svg>
      </div>
      <div className="ml-[12px] flex w-[29px] shrink-0 flex-col items-center pt-[3px] text-[15px] leading-[22px]">
        <Fit className="w-[28px]">ENG</Fit>
        <Fit className="w-[18px]">US</Fit>
      </div>
      <div className="ml-[15px] flex w-[76px] shrink-0 flex-col items-center pt-[2px] text-[15px] leading-[22.500px]">
        <Fit className="w-[35px]">09:48</Fit>
        <Fit className="w-[76px]">07/12/2021</Fit>
      </div>
      <svg className="mt-[15px] ml-[24px] h-[20px] w-[20px] shrink-0" viewBox="0 0 20 20" fill="none" stroke="#111" strokeWidth="1.300">
        <path d="M.7.700h18.600v15H12.500L10 18.500l-2.500-2.800H.7z" />
      </svg>
      <div className="ml-[25px] h-[50px] w-px bg-[#a8a8a8]" />
    </div>
  );
}

export default function App() {
  return (
    <div className="h-[1080px] w-[1920px] overflow-hidden bg-[#f3f3f3] font-['Open_Sans',sans-serif]">
      <div className="relative h-[81px] bg-[#2b579a]">
        <svg className="absolute top-0 right-0 h-[81px] w-[620px]" viewBox="0 0 620 81" fill="#2b4c82">
          <path d="M134 0h100q8 25 3 60-10-6-35-1-42 6-68 0-9-4-9-8 8 4 14 2-10-14-12-30 1-12 7-22z" />
          <path d="M264 0h190q3 22-15 36 10 2 22-1 6 3 1 8-20 22-52 17-40-4-75-14-45-6-70 9 0-12 12-20-16-10-13-35z" />
          <path d="M556 0h64v66h-20q-26 2-38-11-20-6-20-15 3-10 15-8 10-12-1-32z" opacity=".5" />
          <path d="M543 38q8-10 20-5 10 5 12 10 20 0 22 10-6 12-30 6-22-4-24-21z" />
          <path d="M0 42q20-10 50-8 40 4 72-1 8 2 3 7-30 11-70 7Q20 42 0 42z" opacity=".35" />
        </svg>
        <TitleBar />
        <Tabs />
      </div>
      <div className="flex h-[115px] border-b border-[#d0d0d0] text-[15px] leading-[20px] text-[#262626]">
        <ClipboardGroup />
        <GroupSep />
        <FontGroup />
        <GroupSep />
        <ParagraphGroup />
        <GroupSep />
        <StylesGroup />
        <GroupSep />
        <EditingGroup />
        <GroupSep />
        <svg className="mt-[102px] ml-[49px] h-[8px] w-[13px] shrink-0" viewBox="0 0 13 8" fill="none" stroke="#444" strokeWidth="1.300">
          <path d="M.7 7.200 6.500 1.500l5.800 5.700" />
        </svg>
      </div>
      <Document />
      <StatusBar />
      <Taskbar />
    </div>
  );
}
